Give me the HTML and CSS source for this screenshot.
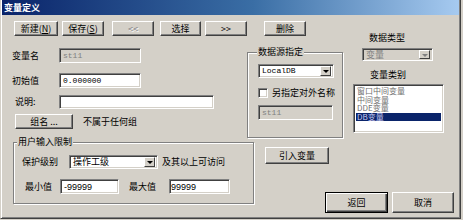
FILE: index.html
```html
<!DOCTYPE html>
<html lang="zh">
<head>
<meta charset="utf-8">
<title>变量定义</title>
<link rel="stylesheet" href="styles.css">
</head>
<body>
<div class="window">
  <div class="titlebar">变量定义</div>
  <div class="body">
    <div class="toolbar">
      <div class="btn b-new">新建(<u>N</u>)</div>
      <div class="btn b-save">保存(<u>S</u>)</div>
      <div class="btn b-prev disabled">&lt;&lt;</div>
      <div class="btn b-sel">选择</div>
      <div class="btn b-next">&gt;&gt;</div>
      <div class="btn b-del">删除</div>
    </div>

    <div class="form">
      <div class="frow r-name"><span class="lbl">变量名</span><div class="field f-short disabled-field mono">st11</div></div>
      <div class="frow r-init"><span class="lbl">初始值</span><div class="field f-short mono">0.000000</div></div>
      <div class="frow r-desc"><span class="lbl lbl-desc">说明:</span><div class="field f-long"></div></div>
      <div class="frow r-group"><div class="btn b-group">组名 ...</div><span class="grp-text">不属于任何组</span></div>
    </div>

    <div class="group g-user">
      <span class="legend">用户输入限制</span>
      <div class="urow u-level">
        <span class="lbl-level">保护级别</span>
        <div class="field combo c-level"><span class="cval">操作工级</span><span class="arrow"></span></div>
        <span class="level-note">及其以上可访问</span>
      </div>
      <div class="urow u-range">
        <span class="lbl-min">最小值</span>
        <div class="field f-min sans">-99999</div>
        <span class="lbl-max">最大值</span>
        <div class="field f-max sans">99999</div>
      </div>
    </div>

    <div class="group g-src">
      <span class="legend">数据源指定</span>
      <div class="field combo c-src"><span class="cval mono">LocalDB</span><span class="arrow"></span></div>
      <div class="chk-row"><span class="chk"></span><span class="chk-text">另指定对外名称</span></div>
      <div class="field f-ext disabled-field mono">st11</div>
    </div>

    <div class="btn b-import">引入变量</div>

    <div class="right">
      <span class="rlbl rl-type">数据类型</span>
      <div class="field combo c-type disabled-field"><span class="cval">变量</span><span class="arrow arrow-dis"></span></div>
      <span class="rlbl rl-cat">变量类别</span>
      <div class="field list">
        <div class="item">窗口中间变量</div>
        <div class="item">中间变量</div>
        <div class="item">DDE变量</div>
        <div class="item selected">DB变量</div>
      </div>
    </div>

    <div class="actions">
      <div class="btn b-ok default">返回</div>
      <div class="btn b-cancel">取消</div>
    </div>
  </div>
</div>
</body>
</html>
```

FILE: styles.css
```css
* { box-sizing: border-box; }

body {
  margin: 0;
  background: #d4d0c8;
  font-family: "Noto Sans CJK SC", "Liberation Sans", sans-serif;
  font-size: 9px;
  line-height: 10px;
  color: #000;
}

.window {
  width: 461px;
  height: 219px;
  background: #d4d0c8;
  border: 1px solid;
  border-top: 0;
  border-color: #d4d0c8 #404040 #404040 #d4d0c8;
  padding: 0 1px 1px 1px;
  box-shadow: inset 1px 0 #fff, inset -1px -1px #808080;
  display: flex;
  flex-direction: column;
}

.titlebar {
  height: 15px;
  flex: none;
  background: linear-gradient(90deg, #0a246a 0%, #3a6ea5 55%, #a6caf0 100%);
  color: #fff;
  font-weight: bold;
  line-height: 15px;
  padding-left: 2px;
}

.body {
  flex: 1;
  display: grid;
  grid-template-columns: 245px 95px 1fr;
  grid-template-rows: 25px 98px 1fr;
}

/* buttons */
.btn {
  display: flex;
  align-items: center;
  justify-content: center;
  background: #d4d0c8;
  border: 1px solid;
  border-color: #fff #404040 #404040 #fff;
  box-shadow: inset -1px -1px #808080;
  height: 15px;
  white-space: nowrap;
}
.btn u { text-decoration: underline; }
.btn.disabled { color: #808080; text-shadow: 1px 1px #fff; }
.btn.default {
  border-color: #000;
  box-shadow: inset 1px 1px #fff, inset -1px -1px #404040, inset -2px -2px #808080;
}

.toolbar {
  grid-column: 1 / 3;
  grid-row: 1;
  display: flex;
  align-items: flex-start;
  padding-top: 6px;
}
.b-new { width: 44px; margin-left: 12px; }
.b-save { width: 42px; margin-left: 4px; }
.b-prev { width: 42px; margin-left: 8px; }
.b-sel { width: 41px; margin-left: 6px; }
.b-next { width: 42px; margin-left: 4px; }
.b-del { width: 42px; margin-left: 17px; }

/* sunken fields */
.field {
  background: #fff;
  border: 1px solid;
  border-color: #808080 #fff #fff #808080;
  box-shadow: inset 1px 1px #404040, inset -1px -1px #d4d0c8;
  height: 15px;
  padding-left: 3px;
  display: flex;
  align-items: center;
  white-space: nowrap;
}
.disabled-field { background: #d4d0c8; color: #808080; }
.mono { font-family: "Liberation Mono", monospace; font-size: 8px; }
.sans { font-family: "Liberation Sans", sans-serif; font-size: 9px; }

.combo { padding-right: 2px; }
.combo .cval { flex: 1; }
.arrow {
  width: 11px;
  height: 10px;
  flex: none;
  background: #d4d0c8;
  border: 1px solid;
  border-color: #fff #404040 #404040 #fff;
  position: relative;
}
.arrow::after {
  content: "";
  position: absolute;
  left: 2px;
  top: 3px;
  border-left: 3px solid transparent;
  border-right: 3px solid transparent;
  border-top: 3px solid #000;
}
.arrow-dis::after { border-top-color: #808080; }

/* left form */
.form {
  grid-column: 1;
  grid-row: 2;
  padding: 8px 0 0 10px;
  display: flex;
  flex-direction: column;
}
.frow { display: flex; align-items: center; height: 15px; }
.lbl { width: 47px; flex: none; }
.lbl-desc { padding-left: 3px; }
.r-init { margin-top: 10px; }
.r-desc { margin-top: 7px; height: 14px; }
.r-desc .field { height: 14px; }
.r-group { margin-top: 5px; }
.f-short { width: 82px; }
.f-long { width: 155px; }
.b-group { width: 58px; margin-left: 3px; }
.grp-text { margin-left: 10px; }

/* group boxes */
.group {
  position: relative;
  border: 1px solid #808080;
  box-shadow: inset 1px 1px #fff, 1px 1px #fff;
}
.legend {
  position: absolute;
  top: -6px;
  left: 3px;
  padding: 0 1px;
  background: #d4d0c8;
  line-height: 10px;
  white-space: nowrap;
}

.g-user {
  grid-column: 1;
  grid-row: 3;
  align-self: start;
  margin: 4px 0 0 11px;
  width: 241px;
  height: 62px;
  padding: 12px 0 0 8px;
}
.urow { display: flex; align-items: center; }
.u-level { height: 14px; }
.lbl-level { width: 47px; flex: none; }
.c-level { width: 89px; height: 14px; }
.level-note { margin-left: 4px; }
.u-range { margin-top: 10px; height: 15px; }
.lbl-min { width: 35px; margin-left: 3px; flex: none; }
.f-min { width: 59px; }
.lbl-max { width: 40px; margin-left: 10px; flex: none; }
.f-max { width: 61px; padding-left: 1px; }

.g-src {
  grid-column: 2;
  grid-row: 2;
  align-self: start;
  margin-top: 12px;
  width: 96px;
  height: 86px;
  padding: 11px 0 0 10px;
}
.g-src .legend { left: 9px; }
.c-src { width: 76px; height: 14px; }
.chk-row { display: flex; align-items: center; height: 10px; margin-top: 10px; }
.chk {
  width: 10px;
  height: 10px;
  flex: none;
  background: #fff;
  border: 1px solid;
  border-color: #808080 #fff #fff #808080;
  box-shadow: inset 1px 1px #404040, inset -1px -1px #d4d0c8;
}
.chk-text { margin-left: 4px; white-space: nowrap; }
.f-ext { width: 75px; margin-top: 7px; }

.b-import {
  grid-column: 2;
  grid-row: 3;
  align-self: start;
  justify-self: start;
  margin: 9px 0 0 18px;
  width: 64px;
  height: 17px;
}

/* right column */
.right {
  grid-column: 3;
  grid-row: 1 / 3;
  display: flex;
  flex-direction: column;
  align-items: flex-start;
}
.rlbl { white-space: nowrap; }
.rl-type { margin: 18px 0 0 27px; }
.c-type { width: 71px; height: 13px; margin: 5px 0 0 20px; }
.c-type .arrow { height: 9px; }
.rl-cat { margin: 9px 0 0 28px; }
.list {
  width: 91px;
  height: 49px;
  margin: 4px 0 0 11px;
  padding: 2px 2px 0 2px;
  display: block;
  color: #707070;
}
.item { font-size: 8px; line-height: 8.5px; height: 8.5px; padding-left: 1px; }
.item.selected { background: #0a246a; color: #c8c8f0; }

.actions {
  grid-column: 2 / 4;
  grid-row: 3;
  justify-self: end;
  align-self: end;
  display: flex;
  gap: 4px;
  margin: 0 5px 4px 0;
}
.b-ok { width: 63px; height: 21px; }
.b-cancel { width: 62px; height: 21px; }
```
